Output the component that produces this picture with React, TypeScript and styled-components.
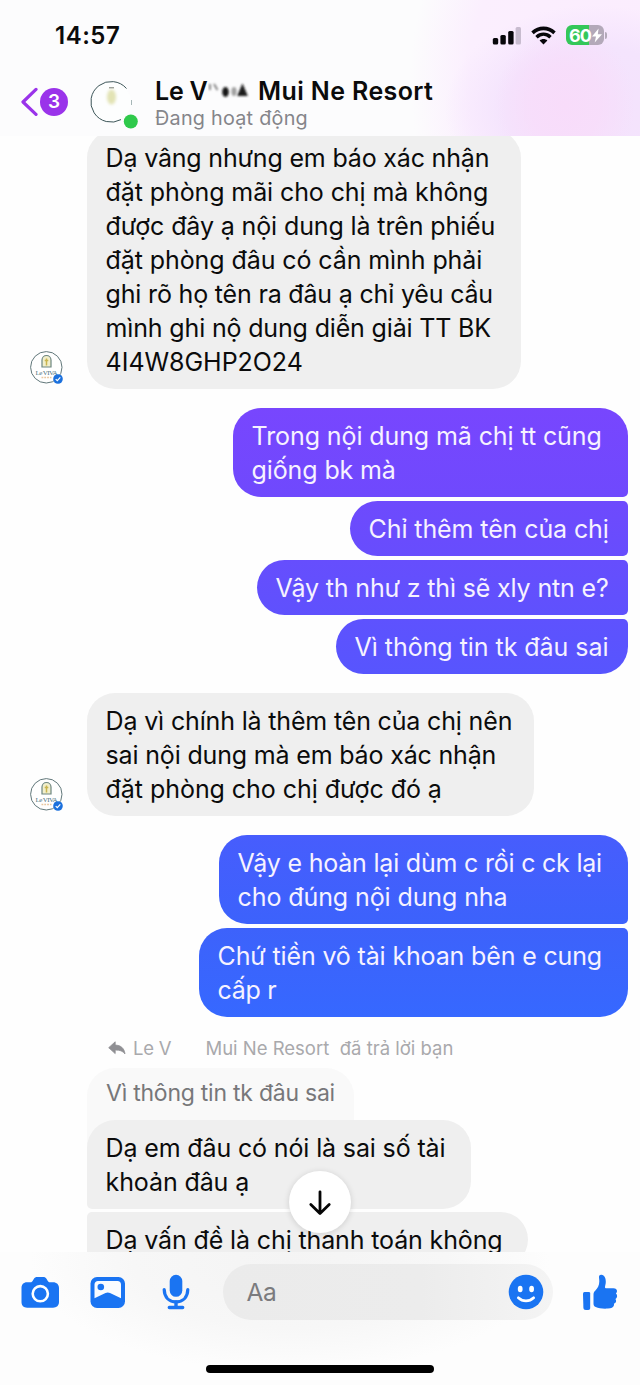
import React from "react";
import styled, { createGlobalStyle } from "styled-components";

const GlobalStyle = createGlobalStyle`
  *, *::before, *::after { box-sizing: border-box; }
  body { margin: 0; background: #fefefe; }
`;

const Screen = styled.main`
  display: flex;
  flex-direction: column;
  width: 640px;
  height: 1385px;
  overflow: hidden;
  background: #fefefe;
  color: #0b0b0b;
  font-family: Inter, "Noto Sans", sans-serif;
`;

const Header = styled.header`
  flex: none;
  height: 136px;
  background:
    radial-gradient(ellipse 70px 80px at 565px 105px, #f8dcfa 0%, rgba(248, 220, 250, 0.75) 50%, rgba(248, 220, 250, 0) 100%),
    radial-gradient(ellipse 150px 105px at 595px 110px, #f4e2fc 0%, #f4e4fd 60%, rgba(247, 233, 253, 0) 100%),
    radial-gradient(ellipse 210px 250px at 620px 80px, #fbecfe 0%, #fbeffe 72%, rgba(252, 248, 254, 0) 100%),
    #fcfcfd;
`;

const StatusBar = styled.div`
  display: flex;
  align-items: center;
  justify-content: space-between;
  height: 70px;
  padding: 0 34px 0 55px;
`;

const Clock = styled.time`
  margin-top: 2px;
  font-size: 24px;
  font-weight: 600;
  letter-spacing: 0.5px;
  line-height: 30px;
`;

const StatusIcons = styled.div`
  display: flex;
  align-items: center;
  gap: 10px;
`;

const Battery = styled.div`
  position: relative;
  display: flex;
  align-items: center;
  width: 38px;
  height: 20px;
  padding-left: 3px;
  border-radius: 6px;
  background: linear-gradient(90deg, #34c759 0 60%, #b3a9b9 60%);
  color: #fff;
  font-size: 18px;
  font-weight: 700;
  letter-spacing: -0.9px;
  margin-right: 2px;

  &::after {
    content: "";
    position: absolute;
    right: -3px;
    top: 6.5px;
    width: 2px;
    height: 7px;
    border-radius: 0 2px 2px 0;
    background: #b3a9b9;
  }
`;

const Contact = styled.div`
  display: flex;
  align-items: flex-start;
  height: 66px;
  padding-left: 20px;
`;

const BackButton = styled.button`
  display: flex;
  align-items: center;
  gap: 2px;
  width: 70px;
  height: 30px;
  margin-top: 16.5px;
  padding: 0;
  border: 0;
  background: none;
  font-family: inherit;
`;

const Unread = styled.span`
  display: flex;
  align-items: center;
  justify-content: center;
  width: 28px;
  height: 28px;
  border-radius: 50%;
  background: #9a33ea;
  color: #fff;
  font-size: 19px;
  font-weight: 600;
`;

const AvatarBox = styled.div`
  width: 50px;
  height: 52px;
  margin-top: 9.5px;
  line-height: 0;
`;

const Names = styled.div`
  display: flex;
  flex-direction: column;
  margin: 5px 0 0 15px;
`;

const NameRow = styled.h1`
  display: flex;
  align-items: center;
  margin: 0;
  height: 31px;
  font-size: 25px;
  font-weight: 600;
  white-space: nowrap;
`;

const NamePart = styled.span<{ $track?: number; $left?: number }>`
  margin-left: ${(p) => p.$left ?? 0}px;
  letter-spacing: ${(p) => p.$track ?? 0}px;
`;

const Presence = styled.div`
  color: #85858a;
  font-size: 19.8px;
  line-height: 24px;
  letter-spacing: 0.25px;
`;

const Conversation = styled.section`
  flex: none;
  display: flex;
  flex-direction: column;
  height: 1116px;
  overflow: hidden;
`;

const Group = styled.div<{ $mine?: boolean; $top?: number }>`
  flex: none;
  display: flex;
  flex-direction: ${(p) => (p.$mine ? "column" : "row")};
  align-items: flex-end;
  gap: ${(p) => (p.$mine ? "3.8px" : "0")};
  margin-top: ${(p) => p.$top ?? 19.4}px;
  padding-right: 12px;
`;

const AvatarSlot = styled.div`
  flex: none;
  width: 87px;
  padding: 0 0 4px 29px;
  line-height: 0;
`;

const Bubble = styled.div<{ $w: number; $from?: string; $to?: string; $corners?: string }>`
  flex: none;
  width: ${(p) => p.$w}px;
  padding: 11px 19px 10px 18.6px;
  border-radius: ${(p) => p.$corners ?? "28px"};
  background: ${(p) => (p.$from ? `linear-gradient(${p.$from}, ${p.$to})` : "#efefef")};
  color: ${(p) => (p.$from ? "#f6f2ff" : "#0b0b0b")};
`;

const TextLine = styled.div<{ $track?: number }>`
  height: 34px;
  font-size: 25px;
  line-height: 34px;
  white-space: nowrap;
  letter-spacing: ${(p) => p.$track ?? 0}px;
`;

const ReplyLabel = styled.div`
  flex: none;
  display: flex;
  align-items: center;
  height: 24px;
  margin-top: 19px;
  padding-left: 108px;
  color: #a9a9ac;
  font-size: 18.5px;
  white-space: nowrap;
`;

const LabelPart = styled.span<{ $left: number; $track?: number }>`
  margin-left: ${(p) => p.$left}px;
  letter-spacing: ${(p) => p.$track ?? 0}px;
`;

const Thread = styled.div`
  flex: none;
  display: flex;
  flex-direction: column;
  align-items: flex-start;
  margin-top: 7.8px;
  padding-left: 87px;
`;

const Quote = styled.div`
  width: 267px;
  height: 80px;
  margin-bottom: -28.3px;
  padding: 8.5px 19px;
  border-radius: 28px 28px 0 0;
  background: #f9f9f9;
  color: #77777a;

  ${TextLine} {
    font-size: 23px;
  }
`;

const ReplyBubble = styled(Bubble)`
  position: relative;
  margin-bottom: 3.6px;
`;

const Composer = styled.footer`
  position: relative;
  flex: none;
  display: flex;
  align-items: flex-start;
  height: 133px;
  padding: 12px 0 0 20px;
  background: radial-gradient(ellipse 260px 110px at 290px 10px, #f4f4f4 0%, #f7f7f7 60%, rgba(253, 253, 253, 0) 100%), #fdfdfd;
`;

const Tool = styled.button<{ $w: number }>`
  display: flex;
  align-items: center;
  flex: none;
  width: ${(p) => p.$w}px;
  height: 56px;
  padding: 0;
  border: 0;
  background: none;
  color: #1a74f2;
`;

const Field = styled.div`
  display: flex;
  align-items: center;
  justify-content: space-between;
  width: 330px;
  height: 56px;
  margin-right: 29.5px;
  padding: 0 8.5px 0 24px;
  border-radius: 28px;
  background: linear-gradient(90deg, #ebebeb 0%, #ececec 60%, #f4f4f4 100%);
  color: #7b7b7e;
  font-size: 24.5px;
  letter-spacing: -0.4px;
`;

const HomeIndicator = styled.div`
  position: absolute;
  left: 206px;
  bottom: 12px;
  width: 228px;
  height: 8px;
  border-radius: 4px;
  background: #000;
`;

const ScrollDown = styled.button`
  position: absolute;
  left: 289px;
  top: -81px;
  display: flex;
  align-items: center;
  justify-content: center;
  width: 62px;
  height: 62px;
  padding: 0;
  border: 0;
  border-radius: 50%;
  background: #fff;
  box-shadow: 0 1px 6px rgba(0, 0, 0, 0.14);
`;

const SignalIcon = () => (
  <svg width="29" height="19" viewBox="0 0 29 19">
    <rect x=".8" y="12" width="5.4" height="6.500" rx="1.5" fill="#08070b" />
    <rect x="8.400" y="9" width="5.4" height="9.500" rx="1.5" fill="#08070b" />
    <rect x="16.200" y="5" width="5.4" height="13.500" rx="1.5" fill="#08070b" />
    <rect x="23.600" y="1" width="5.4" height="17.500" rx="1.5" fill="#c8bccf" />
  </svg>
);

const WifiIcon = () => (
  <svg width="25" height="19" viewBox="0 0 25 19" fill="none" stroke="#08070b">
    <path d="M1.5 6.8C8 .9 17 .9 23.5 6.8" strokeWidth="3.6" />
    <path d="M5.5 11.2c4.2-3.8 9.8-3.8 14 0" strokeWidth="3.5" />
    <path d="M12.5 18.4 8.6 14.6c2.2-2 5.6-2 7.8 0z" fill="#08070b" stroke="none" />
  </svg>
);

const BoltIcon = () => (
  <svg width="12" height="15" viewBox="0 0 12 15">
    <path d="M7.6.5 1 8.4h4L3.7 14.5 11 6.3H6.8z" fill="#fff" />
  </svg>
);

const BackIcon = () => (
  <svg width="18" height="30" viewBox="0 0 18 30" fill="none">
    <path d="M16 2.4 3 15l13 12.4" stroke="#9a33ea" strokeWidth="3.2" strokeLinecap="round" strokeLinejoin="round" />
  </svg>
);

const HeaderAvatar = () => (
  <svg width="50" height="52" viewBox="0 0 50 52">
    <defs>
      <filter id="soft" x="-50%" y="-50%" width="200%" height="200%">
        <feGaussianBlur stdDeviation="1.6" />
      </filter>
    </defs>
    <circle cx="21" cy="22" r="20" fill="#fdfefe" />
    <path d="M36.5 8.5A20.3 20.3 0 1 0 31 39.6" fill="none" stroke="#3c5558" strokeWidth="1" />
    <path d="M41.5 20v5" stroke="#8fa3a5" strokeWidth=".8" />
    <ellipse cx="21.5" cy="17" rx="4.5" ry="7.5" fill="#e2e3b4" filter="url(#soft)" />
    <path d="M19 7.8h5" stroke="#777b71" strokeWidth="1" />
    <circle cx="40.8" cy="41.5" r="7" fill="#2fc94b" />
  </svg>
);

const SmudgedName = () => (
  <svg width="42" height="22" viewBox="0 0 42 22">
    <defs>
      <filter id="smudge" x="-30%" y="-30%" width="160%" height="160%">
        <feGaussianBlur stdDeviation=".8" />
      </filter>
    </defs>
    <g filter="url(#smudge)">
      <path d="M2 4v6M6 4l3.5 6" stroke="#7b7b7b" strokeWidth="1.8" />
      <ellipse cx="17.5" cy="12" rx="3.3" ry="5" fill="#181818" />
      <ellipse cx="26" cy="11.5" rx="2.6" ry="4.5" fill="#a0a0a0" />
      <path d="M34.5 3.5 39.8 16H29z" fill="#1b1b1b" />
    </g>
  </svg>
);

const Brand = styled.text`
  font-family: "Liberation Serif", serif;
  font-size: 7px;
  fill: #4f7482;
`;

const PageAvatar = () => (
  <svg width="35" height="35" viewBox="0 0 35 35">
    <circle cx="17.3" cy="17.3" r="15.7" fill="#fff" stroke="#61777a" strokeWidth="1" />
    <path d="M13 17V10a4.5 4.5 0 0 1 9 0v7z" fill="#f2efcb" stroke="#6c8580" strokeWidth="1.2" />
    <path d="M17.5 8.5v7M15.7 10.5h3.6" stroke="#c9b54e" strokeWidth="1.5" />
    <Brand x="6.5" y="24.6" textLength="22" lengthAdjust="spacing">Le VIVA</Brand>
    <path d="M12.5 27.5h10" stroke="#e9c7a0" strokeWidth="1.4" strokeDasharray="1.8 1" />
    <circle cx="29" cy="29" r="4.8" fill="#1b70dd" />
    <path d="m26.7 29.1 1.6 1.6 3-3.3" fill="none" stroke="#fff" strokeWidth="1.2" />
  </svg>
);

const ReplyIcon = () => (
  <svg width="18" height="14" viewBox="0 0 18 14">
    <path d="M7.2.8v3.3c5.3.1 9 2.8 9.8 8.8-2.4-3-5.2-4-9.8-3.8v3.5L.7 6.7z" fill="#8f8f93" stroke="#8f8f93" strokeWidth=".8" strokeLinejoin="round" />
  </svg>
);

const ArrowDownIcon = () => (
  <svg width="24" height="28" viewBox="0 0 24 28" fill="none" stroke="#050505" strokeWidth="2.8" strokeLinecap="round" strokeLinejoin="round">
    <path d="M12 3.8v21.5M2.8 16.5 12 25.5l9.2-9" />
  </svg>
);

const CameraIcon = () => (
  <svg width="40" height="34" viewBox="0 0 40 34">
    <path d="M7 7.2h3.6c1 0 1.7-.8 2.3-1.8l.9-1.4C14.7 2.6 15.7 2 17.2 2h6c1.5 0 2.5.6 3.4 2l.9 1.4c.6 1 1.3 1.8 2.3 1.8h3.2c3.7 0 6 2.3 6 5.8v14c0 3.5-2.3 5.7-6 5.7H7.2c-3.7 0-5.7-2.2-5.7-5.7V13c0-3.5 2-5.8 5.5-5.8z" fill="currentColor" />
    <circle cx="20.3" cy="18.7" r="7.6" fill="currentColor" stroke="#fff" strokeWidth="2.6" />
  </svg>
);

const PhotoIcon = () => (
  <svg width="36" height="34" viewBox="0 0 36 34">
    <rect x=".5" y="2" width="34.5" height="31" rx="6.5" fill="currentColor" />
    <path d="M4.500 9.500c0-2 1.500-3.500 3.500-3.500h19.600c2 0 3.400 1.500 3.400 3.500v13.700l-11-5.200c-1.500-.7-3-.7-4.500 0l-11 5.200z" fill="#fafcff" />
    <circle cx="10.800" cy="12" r="3.300" fill="currentColor" />
  </svg>
);

const MicIcon = () => (
  <svg width="30" height="38" viewBox="0 0 30 38" fill="none" stroke="currentColor" strokeLinecap="round">
    <rect x="8.7" y="1.8" width="12.6" height="22" rx="6.3" fill="currentColor" stroke="none" />
    <path d="M3.2 16.500c.2 8 5 12.300 11.800 12.300s11.600-4.300 11.800-12.300" strokeWidth="3.2" />
    <path d="M15 29v5M8.3 34.5h13.4" strokeWidth="3.4" />
  </svg>
);

const SmileIcon = () => (
  <svg width="36" height="36" viewBox="0 0 36 36">
    <circle cx="18" cy="18" r="17.3" fill="#1a74f2" />
    <ellipse cx="12.2" cy="15" rx="2.4" ry="3.3" fill="#fff" />
    <ellipse cx="23.6" cy="15" rx="2.4" ry="3.3" fill="#fff" />
    <path d="M10.3 23.8c4.5 4.2 10.9 4.2 15.4 0" fill="none" stroke="#fff" strokeWidth="2.7" strokeLinecap="round" />
  </svg>
);

const LikeIcon = () => (
  <svg width="36" height="38" viewBox="0 0 36 38" fill="currentColor">
    <path d="M2.5 19h4.2c1 0 1.5.5 1.500 1.500V35c0 1.300-.7 2-2 2H3.800c-1.500 0-2.300-.7-2.400-2.200L1 21c0-1.300.5-2 1.500-2z" />
    <path d="M11.5 21.500c0-1.600.5-2.600 1.700-3.800 2.400-2.500 4.100-5.200 4.100-9.200 0-2.300-.4-3.500-.3-4.900.1-1.300 1-2.100 2.400-1.900 3.200.5 4.600 3.500 4.400 7.300-.1 2.300-.8 4.100-.8 5.200 0 .7.5 1 1.200 1h7.300c2.100 0 3.500 1.200 3.500 2.900 0 1.300-.6 2-1.100 2.500.8.7 1.200 1.400 1.200 2.400 0 1.500-.7 2.400-1.700 3 .5.6.8 1.200.7 2.100-.1 1.400-1 2.300-2.200 2.700.2.5.2 1.100 0 1.700-.6 2-2.600 2.900-6 3.100-4.500.3-9.200-.1-12.200-1.600-1.500-.7-2.200-1.600-2.200-3.200z" />
  </svg>
);

type Line = [text: string, track?: number];

const Lines = ({ items }: { items: Line[] }) => (
  <>
    {items.map(([text, track]) => (
      <TextLine key={text} $track={track}>{text}</TextLine>
    ))}
  </>
);

export default function App() {
  return (
    <>
      <GlobalStyle />
      <Screen>
        <Header>
          <StatusBar>
            <Clock>14:57</Clock>
            <StatusIcons>
              <SignalIcon />
              <WifiIcon />
              <Battery>60<BoltIcon /></Battery>
            </StatusIcons>
          </StatusBar>
          <Contact>
            <BackButton aria-label="Back">
              <BackIcon />
              <Unread>3</Unread>
            </BackButton>
            <AvatarBox><HeaderAvatar /></AvatarBox>
            <Names>
              <NameRow>
                <NamePart $track={-0.2}>Le V</NamePart>
                <SmudgedName />
                <NamePart $left={8.5} $track={0.38}>Mui Ne Resort</NamePart>
              </NameRow>
              <Presence>Đang hoạt động</Presence>
            </Names>
          </Contact>
        </Header>

        <Conversation>
          <Group $top={-6.2}>
            <AvatarSlot><PageAvatar /></AvatarSlot>
            <Bubble $w={434}>
              <Lines
                items={[
                  ["Dạ vâng nhưng em báo xác nhận", -0.18],
                  ["đặt phòng mãi cho chị mà không", -0.1],
                  ["được đây ạ nội dung là trên phiếu", -0.12],
                  ["đặt phòng đâu có cần mình phải", -0.09],
                  ["ghi rõ họ tên ra đâu ạ chỉ yêu cầu", -0.18],
                  ["mình ghi nộ dung diễn giải TT BK", -0.16],
                  ["4I4W8GHP2O24", -0.04],
                ]}
              />
            </Bubble>
          </Group>

          <Group $mine>
            <Bubble $w={395} $from="#7846fe" $to="#6f49fd" $corners="28px 28px 5px 28px">
              <Lines items={[["Trong nội dung mã chị tt cũng", -0.1], ["giống bk mà", -0.12]]} />
            </Bubble>
            <Bubble $w={278} $from="#6e4afd" $to="#674dfd" $corners="28px 5px 5px 28px">
              <Lines items={[["Chỉ thêm tên của chị", -0.1]]} />
            </Bubble>
            <Bubble $w={371} $from="#664efd" $to="#5f51fd" $corners="28px 5px 5px 28px">
              <Lines items={[["Vậy th như z thì sẽ xly ntn e?", -0.15]]} />
            </Bubble>
            <Bubble $w={292} $from="#5e52fe" $to="#5755fe" $corners="28px 5px 28px 28px">
              <Lines items={[["Vì thông tin tk đâu sai", -0.04]]} />
            </Bubble>
          </Group>

          <Group>
            <AvatarSlot><PageAvatar /></AvatarSlot>
            <Bubble $w={447}>
              <Lines
                items={[
                  ["Dạ vì chính là thêm tên của chị nên", -0.16],
                  ["sai nội dung mà em báo xác nhận", -0.17],
                  ["đặt phòng cho chị được đó ạ", -0.05],
                ]}
              />
            </Bubble>
          </Group>

          <Group $mine>
            <Bubble $w={409} $from="#475dfd" $to="#3c62fc" $corners="28px 28px 5px 28px">
              <Lines items={[["Vậy e hoàn lại dùm c rồi c ck lại", -0.21], ["cho đúng nội dung nha", -0.1]]} />
            </Bubble>
            <Bubble $w={429} $from="#3d62fb" $to="#3668ff" $corners="28px 5px 28px 28px">
              <Lines items={[["Chứ tiền vô tài khoan bên e cung", -0.15], ["cấp r", -0.3]]} />
            </Bubble>
          </Group>

          <ReplyLabel>
            <ReplyIcon />
            <LabelPart $left={7} $track={-0.2}>Le V</LabelPart>
            <LabelPart $left={34}>Mui Ne Resort</LabelPart>
            <LabelPart $left={10.5}>đã trả lời bạn</LabelPart>
          </ReplyLabel>

          <Thread>
            <Quote>
              <Lines items={[["Vì thông tin tk đâu sai", -0.24]]} />
            </Quote>
            <ReplyBubble $w={384} $corners="28px 28px 28px 5px">
              <Lines items={[["Dạ em đâu có nói là sai số tài", -0.14], ["khoản đâu ạ", -0.12]]} />
            </ReplyBubble>
            <Bubble $w={441} $corners="5px 28px 28px 5px">
              <Lines items={[["Dạ vấn đề là chị thanh toán không", -0.13]]} />
            </Bubble>
          </Thread>
        </Conversation>

        <Composer>
          <Tool $w={70} aria-label="Camera"><CameraIcon /></Tool>
          <Tool $w={71} aria-label="Photos"><PhotoIcon /></Tool>
          <Tool $w={61.5} aria-label="Voice"><MicIcon /></Tool>
          <Field>
            <span>Aa</span>
            <SmileIcon />
          </Field>
          <Tool $w={38} aria-label="Like"><LikeIcon /></Tool>
          <ScrollDown aria-label="Scroll down"><ArrowDownIcon /></ScrollDown>
          <HomeIndicator />
        </Composer>
      </Screen>
    </>
  );
}
